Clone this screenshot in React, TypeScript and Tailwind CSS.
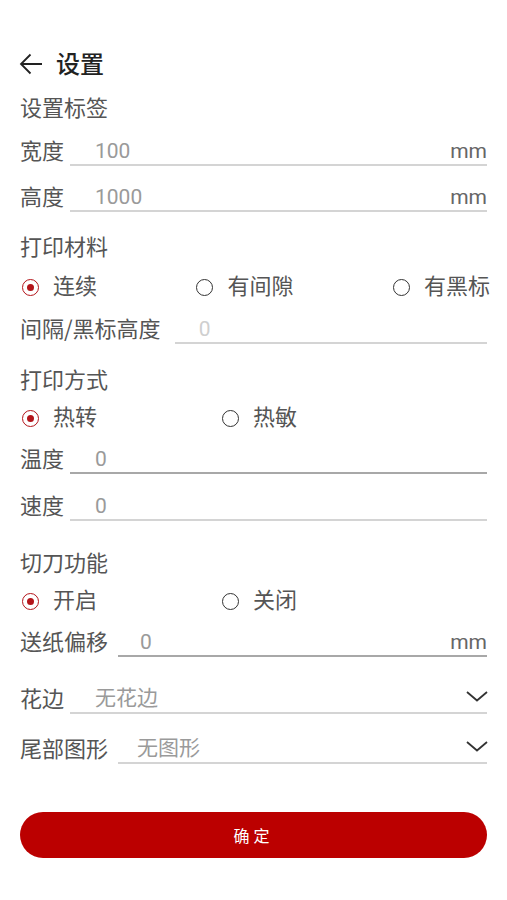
import { ReactNode } from 'react'

const font = { fontFamily: '"Noto Sans CJK SC", "Noto Sans", sans-serif' }
const latin = { fontFamily: 'Roboto, "Noto Sans CJK SC", sans-serif' }

function Radio({ checked }: { checked?: boolean }): ReactNode {
  return checked ? (
    <span className="flex h-[17px] w-[17px] items-center justify-center rounded-full border-[1.5px] border-[#b3141a]">
      <span className="h-[7px] w-[7px] rounded-full bg-[#b3141a]" />
    </span>
  ) : (
    <span className="h-[17px] w-[17px] rounded-full border-[1.5px] border-[#333]" />
  )
}

function Option({ label, checked, className }: { label: string; checked?: boolean; className?: string }): ReactNode {
  return (
    <div className={`flex items-center ${className ?? ''}`}>
      <Radio checked={checked} />
      <span className="ml-[14px] pb-[6px] text-[22px] leading-none text-[#555]">{label}</span>
    </div>
  )
}

function Field({
  label,
  value,
  unit,
  inputClass,
  valueClass,
  lineClass,
  select
}: {
  label: string
  value: string
  unit?: string
  inputClass: string
  valueClass: string
  lineClass?: string
  select?: boolean
}): ReactNode {
  const cjk = /[\u4e00-\u9fff]/.test(value)
  return (
    <div className="flex h-[28px] items-center">
      <span className="shrink-0 pb-[6px] text-[22px] leading-none text-[#555]">{label}</span>
      <div className={`flex h-full flex-1 items-center border-b-2 ${lineClass ?? 'border-[#d4d4d4]'} ${inputClass}`}>
        <span
          className={`flex-1 leading-none ${cjk ? 'pb-[5px] text-[21px]' : 'text-[21px]'} ${valueClass}`}
          style={cjk ? undefined : latin}
        >
          {value}
        </span>
        {unit && (
          <span className="text-[21px] leading-none text-[#666]" style={latin}>
            {unit}
          </span>
        )}
        {select && (
          <svg width="22" height="11" viewBox="0 0 22 11" className="mr-[-1px] mb-[6px]">
            <polyline points="1,1 11,9.5 21,1" fill="none" stroke="#333" strokeWidth="1.8" />
          </svg>
        )}
      </div>
    </div>
  )
}

function Section({ title, className }: { title: string; className: string }): ReactNode {
  return (
    <div className={`flex h-[30px] items-center pb-[5px] text-[22px] leading-none text-[#555] ${className}`}>{title}</div>
  )
}

export default function App(): ReactNode {
  return (
    <div className="min-h-[900px] w-[507px] bg-white px-5" style={font}>
      {/* Header */}
      <div className="box-content flex h-[44px] items-center pt-[43px]">
        <svg width="24" height="22" viewBox="0 0 24 22" className="ml-[-1px] mt-[-2px]">
          <path d="M23 11H2 M11.5 1.5 2 11l9.5 9.5" fill="none" stroke="#222" strokeWidth="1.8" />
        </svg>
        <span className="ml-[13px] pb-[5px] text-[24px] font-medium leading-none text-[#222]">设置</span>
      </div>

      <Section title="设置标签" className="mt-[6px]" />
      <div className="mt-[15px]">
        <Field label="宽度" value="100" unit="mm" inputClass="ml-[6px] pl-[25px]" valueClass="text-[#9a9a9a]" />
      </div>
      <div className="mt-[18px]">
        <Field label="高度" value="1000" unit="mm" inputClass="ml-[6px] pl-[25px]" valueClass="text-[#9a9a9a]" />
      </div>

      <Section title="打印材料" className="mt-[20px]" />
      <div className="mt-[10px] mr-[-3px] flex h-[30px] items-center justify-between pl-[2px]">
        <Option label="连续" checked />
        <Option label="有间隙" />
        <Option label="有黑标" />
      </div>
      <div className="mt-[14px]">
        <Field label="间隔/黑标高度" value="0" inputClass="ml-[14px] pl-[24px]" valueClass="text-[#cfcfcf]" />
      </div>

      <Section title="打印方式" className="mt-[21px]" />
      <div className="mt-[8px] flex h-[30px] items-center pl-[2px]">
        <Option label="热转" checked className="w-[200px]" />
        <Option label="热敏" />
      </div>
      <div className="mt-[13px]">
        <Field label="温度" value="0" inputClass="ml-[6px] pl-[25px]" valueClass="text-[#9a9a9a]" lineClass="border-[#a8a8a8]" />
      </div>
      <div className="mt-[19px]">
        <Field label="速度" value="0" inputClass="ml-[6px] pl-[25px]" valueClass="text-[#9a9a9a]" />
      </div>

      <Section title="切刀功能" className="mt-[27px]" />
      <div className="mt-[8px] flex h-[30px] items-center pl-[2px]">
        <Option label="开启" checked className="w-[200px]" />
        <Option label="关闭" />
      </div>
      <div className="mt-[13px]">
        <Field label="送纸偏移" value="0" unit="mm" inputClass="ml-[10px] pl-[22px]" valueClass="text-[#9a9a9a]" lineClass="border-[#a8a8a8]" />
      </div>

      <div className="mt-[29px]">
        <Field label="花边" value="无花边" select inputClass="ml-[6px] pl-[25px]" valueClass="text-[#9a9a9a]" />
      </div>
      <div className="mt-[22px]">
        <Field label="尾部图形" value="无图形" select inputClass="ml-[10px] pl-[19px]" valueClass="text-[#9a9a9a]" />
      </div>

      <button className="mt-[48px] flex h-[46px] w-full items-center justify-center rounded-full bg-[#bb0000] text-[16px] tracking-[4px] text-white">
        确定
      </button>
    </div>
  )
}
